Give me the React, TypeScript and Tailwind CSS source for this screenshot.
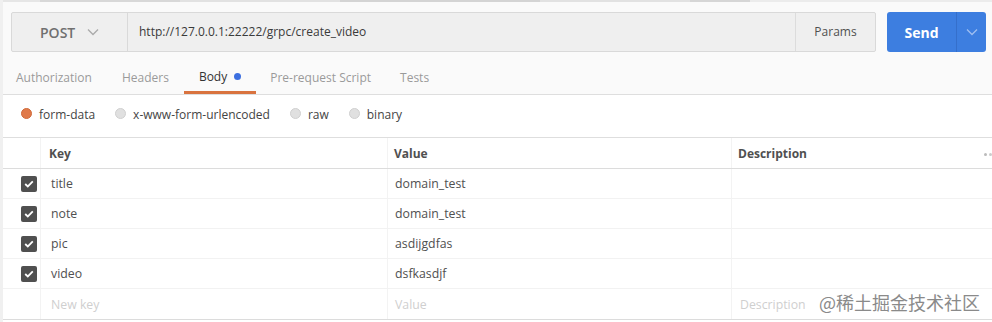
import React from "react";

const rows = [
  { k: "title", v: "domain_test" },
  { k: "note", v: "domain_test" },
  { k: "pic", v: "asdijgdfas" },
  { k: "video", v: "dsfkasdjf" },
];

function Chevron({ className }: { className?: string }) {
  return (
    <svg className={className} width="12" height="8" viewBox="0 0 12 8" fill="none">
      <path d="M1 1.5 L6 6.5 L11 1.5" stroke="currentColor" strokeWidth="1.3" />
    </svg>
  );
}

function Check() {
  return (
    <div className="w-4 h-4 rounded-[2px] bg-[#505050] flex items-center justify-center">
      <svg width="10" height="8" viewBox="0 0 10 8" fill="none">
        <path d="M1.2 4 L3.8 6.4 L8.8 1.4" stroke="white" strokeWidth="1.8" />
      </svg>
    </div>
  );
}

export default function App() {
  return (
    <div
      className="w-[992px] h-[322px] bg-white overflow-hidden relative text-[12px]"
      style={{ fontFamily: '"Open Sans", "Noto Sans", sans-serif' }}
    >
      <div className="absolute left-0 top-0 bottom-0 w-[3px] bg-[#f0f0f0]" />
      {/* top strip */}
      <div className="h-[2px] flex">
        <div className="w-[40px] bg-[#e6e6e6]" />
        <div className="w-[140px] bg-[#d8d8d8]" />
        <div className="w-[160px] bg-[#e2e2e2]" />
        <div className="w-[200px] bg-[#d4d4d4]" />
        <div className="w-[150px] bg-[#e2e2e2]" />
        <div className="w-[60px] bg-[#d6d6d6]" />
        <div className="flex-1 bg-[#ececec]" />
      </div>
      {/* request bar */}
      <div className="bg-[#fafafa] pl-[11px] pr-[6px] pt-[10px] h-[93px] border-b border-[#dedede]">
        <div className="flex h-[40px]">
          <div className="flex flex-1 border border-[#d9d9d9] rounded-[2px] bg-[#efefef]">
            <div className="w-[116px] flex items-center pl-[28px] gap-[12px] border-r border-[#d9d9d9] text-[#707070]">
              <span className="font-semibold text-[14px]">POST</span>
              <Chevron className="text-[#aaa]" />
            </div>
            <div className="flex-1 flex items-center pl-[11px] text-[#3a3a3a] text-[12px]">
              http://127.0.0.1:22222/grpc/create_video
            </div>
            <div className="w-[80px] flex items-center justify-center border-l border-[#dcdcdc] text-[#505050] text-[12px]">
              Params
            </div>
          </div>
          <div className="ml-[11px] w-[99px] flex rounded-[3px] bg-[#3d7ee0] text-white">
            <div className="w-[70px] flex items-center justify-center font-bold text-[14px] border-r border-[#356fcb]">
              Send
            </div>
            <div className="flex-1 flex items-center justify-center">
              <Chevron className="text-[#9fbef0]" />
            </div>
          </div>
        </div>
        {/* tabs */}
        <div className="flex h-[42px] text-[12px]">
          <div className="flex items-center pt-[10px] ml-[5px] text-[#9a9a9a]">Authorization</div>
          <div className="flex items-center pt-[10px] ml-[30px] text-[#9a9a9a]">Headers</div>
          <div className="flex items-center pt-[10px] ml-[15px] px-[15px] text-[#333] border-b-[3px] border-[#d9733f]">
            Body
            <span className="ml-[7px] w-[7px] h-[7px] rounded-full bg-[#3c6fe0]" />
          </div>
          <div className="flex items-center pt-[10px] ml-[14px] text-[#9a9a9a]">Pre-request Script</div>
          <div className="flex items-center pt-[10px] ml-[29px] text-[#9a9a9a]">Tests</div>
        </div>
      </div>
      {/* radios */}
      <div className="h-[43px] flex items-center pb-[3px] pl-[21px] text-[12px] text-[#444] border-b border-[#dedede]">
        <span className="w-[11px] h-[11px] rounded-full bg-[#e07a4a] border border-[#d06a3a] -mt-[2px]" />
        <span className="ml-[7px]">form-data</span>
        <span className="ml-[20px] w-[11px] h-[11px] rounded-full bg-[#e0e0e0] border border-[#d0d0d0] -mt-[2px]" />
        <span className="ml-[7px]">x-www-form-urlencoded</span>
        <span className="ml-[20px] w-[11px] h-[11px] rounded-full bg-[#e0e0e0] border border-[#d0d0d0] -mt-[2px]" />
        <span className="ml-[7px]">raw</span>
        <span className="ml-[20px] w-[11px] h-[11px] rounded-full bg-[#e0e0e0] border border-[#d0d0d0] -mt-[2px]" />
        <span className="ml-[7px]">binary</span>
      </div>
      {/* table */}
      <div className="border-b border-[#dcdcdc]">
        <div className="flex h-[31px] border-b border-[#dcdcdc] font-bold text-[12px] text-[#505050]">
          <div className="w-[41px] border-r border-[#f3f3f3]" />
          <div className="w-[347px] flex items-center pt-[2px] pl-[8px] border-r border-[#f3f3f3]">Key</div>
          <div className="w-[344px] flex items-center pt-[2px] pl-[6px] border-r border-[#f3f3f3]">Value</div>
          <div className="flex-1 flex items-center pt-[2px] pl-[6px] relative">
            Description
            <span className="absolute right-[0px] top-[15px] flex gap-[2px]">
              <span className="w-[3px] h-[3px] rounded-full bg-[#bbb]" />
              <span className="w-[3px] h-[3px] rounded-full bg-[#ccc]" />
            </span>
          </div>
        </div>
        {rows.map((r) => (
          <div key={r.k} className="flex h-[30px] border-b border-[#f2f2f2] text-[12.3px] text-[#505050]">
            <div className="w-[41px] flex items-center justify-end pr-[3px] border-r border-[#f3f3f3]">
              <Check />
            </div>
            <div className="w-[347px] flex items-center pt-[2px] pl-[10px] border-r border-[#f3f3f3]">{r.k}</div>
            <div className="w-[344px] flex items-center pt-[2px] pl-[7px] border-r border-[#f3f3f3]">{r.v}</div>
            <div className="flex-1" />
          </div>
        ))}
        <div className="flex h-[30px] text-[12.3px] text-[#cfcfcf]">
          <div className="w-[41px] border-r border-[#f3f3f3]" />
          <div className="w-[347px] flex items-center pt-[2px] pl-[10px] border-r border-[#f3f3f3]">New key</div>
          <div className="w-[344px] flex items-center pt-[2px] pl-[7px] border-r border-[#f3f3f3]">Value</div>
          <div className="flex-1 flex items-center pt-[2px] pl-[8px] relative">
            Description
            <span
              className="absolute left-[87px] top-[0px] text-[18px] text-[#8a8a8a]"
              style={{ fontFamily: '"Noto Sans CJK SC", sans-serif' }}
            >
              @稀土掘金技术社区
            </span>
          </div>
        </div>
      </div>
    </div>
  );
}
